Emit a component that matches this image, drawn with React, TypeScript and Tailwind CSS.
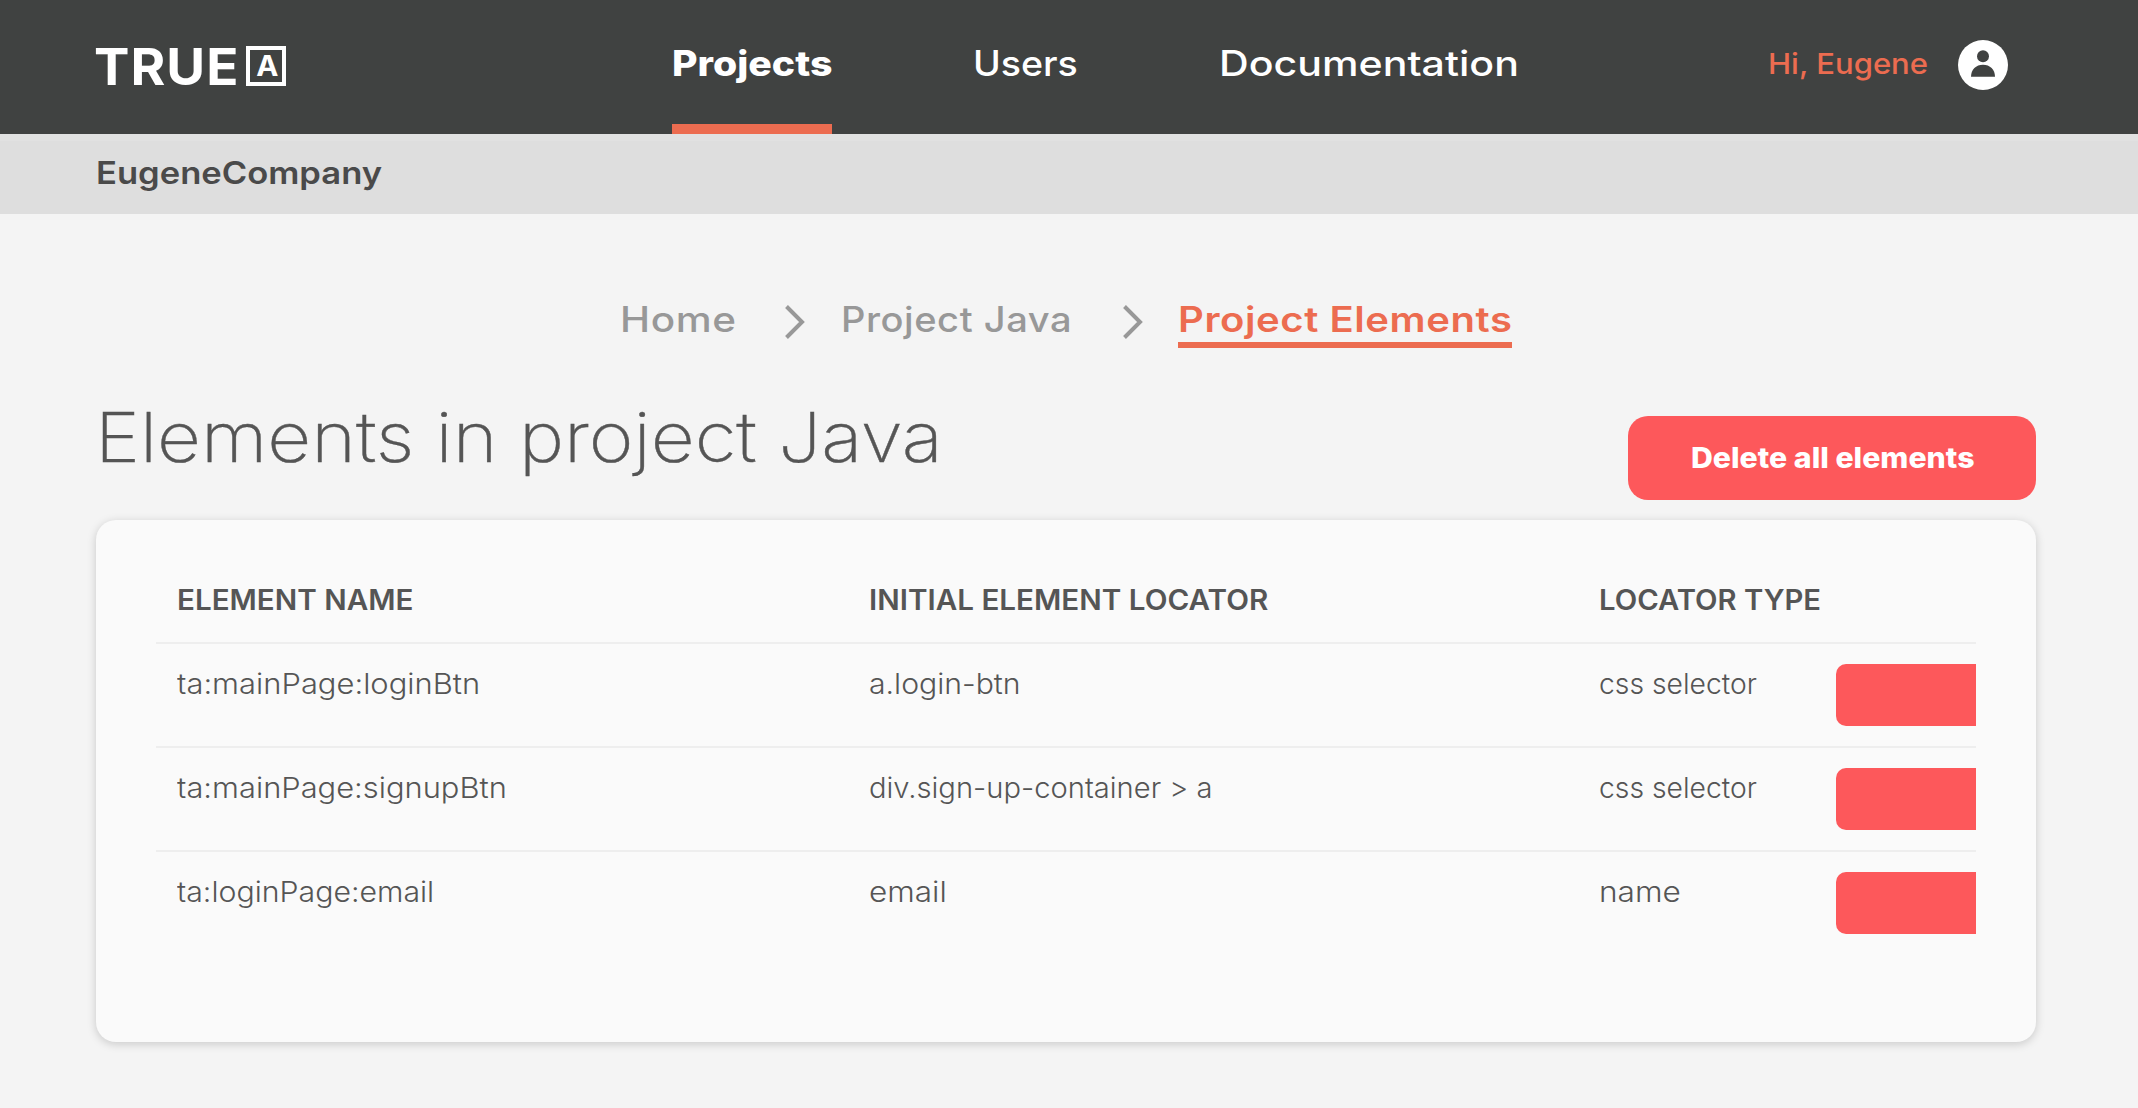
type Cell = { text: string; fit: string };

const rows: { name: Cell; locator: Cell; type: Cell }[] = [
  {
    name: { text: 'ta:mainPage:loginBtn', fit: 'scale-x-[1.104]' },
    locator: { text: 'a.login-btn', fit: 'scale-x-[1.078]' },
    type: { text: 'css selector', fit: 'scale-x-[1.01]' },
  },
  {
    name: { text: 'ta:mainPage:signupBtn', fit: 'scale-x-[1.102]' },
    locator: { text: 'div.sign-up-container > a', fit: 'scale-x-[1.041]' },
    type: { text: 'css selector', fit: 'scale-x-[1.01]' },
  },
  {
    name: { text: 'ta:loginPage:email', fit: 'scale-x-[1.081]' },
    locator: { text: 'email', fit: 'scale-x-[1.126]' },
    type: { text: 'name', fit: 'scale-x-[1.13]' },
  },
];

const headings: Cell[] = [
  { text: 'ELEMENT NAME', fit: 'scale-x-[1.057]' },
  { text: 'INITIAL ELEMENT LOCATOR', fit: 'scale-x-[1.058]' },
  { text: 'LOCATOR TYPE', fit: 'scale-x-[1.044]' },
];

function Wide({ text, fit }: Cell) {
  return <span className={`inline-block origin-left whitespace-nowrap ${fit}`}>{text}</span>;
}

function Logo() {
  return (
    <div className="flex w-[190px] shrink-0 pt-[42px] text-white">
      <div className="-ml-0.5 w-[152px] text-[51px] leading-[50px] font-bold tracking-[1px]">
        <Wide text="TRUE" fit="scale-x-[1.04]" />
      </div>
      <div className="mt-1 h-10 w-10 border-4 border-white pl-0.5 text-center text-[28px] leading-8 font-bold">
        <span className="inline-block scale-x-[1.06]">A</span>
      </div>
    </div>
  );
}

function Avatar() {
  return (
    <svg className="mt-10 shrink-0" width="50" height="50" viewBox="0 0 50 50">
      <circle cx="25" cy="25" r="25" fill="#fff" />
      <circle cx="25" cy="16.3" r="6" fill="#404241" />
      <path d="M13 36.7C13 29.5 18 24.7 25 24.7S37 29.5 37 36.7Z" fill="#404241" />
    </svg>
  );
}

function Chevron() {
  return (
    <svg className="mt-[8px] shrink-0" width="20" height="34" viewBox="0 0 20 34" fill="none" stroke="#989898" strokeWidth="4">
      <path d="M1.5 1.5L17 17L1.5 32.5" />
    </svg>
  );
}

export default function App() {
  return (
    <div className="h-[1108px] w-full overflow-hidden bg-[#f4f4f4] font-['Inter',sans-serif] text-[#555555]">
      <header className="flex h-[134px] items-start bg-[#404241] pl-24">
        <Logo />
        <nav className="ml-[386px] flex gap-[140px] text-[35px] leading-[44px] font-medium text-white">
          <a className="h-[134px] w-40 border-b-[10px] border-[#ec6c50] pt-[41px] font-extrabold">
            <Wide text="Projects" fit="scale-x-[1.12]" />
          </a>
          <a className="w-[107px] pt-[41px] pl-px">
            <Wide text="Users" fit="scale-x-[1.073]" />
          </a>
          <a className="w-[299px] pt-[41px]">
            <Wide text="Documentation" fit="scale-x-[1.175]" />
          </a>
        </nav>
        <div className="ml-[250px] w-[190px] pt-11 text-[29px] leading-10 font-medium text-[#ec6c50]">
          <Wide text="Hi, Eugene" fit="scale-x-[1.07]" />
        </div>
        <Avatar />
      </header>

      <div className="h-20 border-t-[7px] border-[#e1e1e1] bg-[#dedede] pl-24 text-[31px] leading-[64px] font-semibold text-[#4a4a4a]">
        <Wide text="EugeneCompany" fit="scale-x-[1.115]" />
      </div>

      <div className="flex pt-[83px] pl-[620px] text-[35px] leading-[44px] font-medium tracking-[0.5px] text-[#989898]">
        <a className="w-[116px]">
          <Wide text="Home" fit="scale-x-[1.155]" />
        </a>
        <div className="ml-[49px] w-[20px]">
          <Chevron />
        </div>
        <a className="ml-9 w-[232px]">
          <Wide text="Project Java" fit="scale-x-[1.088]" />
        </a>
        <div className="ml-[50px] w-[20px]">
          <Chevron />
        </div>
        <a className="ml-[35px] h-[51px] w-[334px] border-b-[6px] border-[#ec6c50] font-semibold text-[#ec6c50]">
          <Wide text="Project Elements" fit="scale-x-[1.144]" />
        </a>
      </div>

      <main className="w-[2036px] pt-[47px] pl-24">
        <div className="flex h-[105px] items-end justify-between">
          <h1 className="-ml-px self-start text-[69px] leading-[84px] font-extralight [-webkit-text-stroke:0.4px_#555555]">
            <Wide text="Elements in project Java" fit="scale-x-[1.105]" />
          </h1>
          <button className="h-[84px] w-[408px] rounded-[20px] bg-[#fd585b] pl-[63px] text-left text-[28px] leading-[84px] font-extrabold text-white">
            <Wide text="Delete all elements" fit="scale-x-[1.081]" />
          </button>
        </div>

        <section className="mt-5 h-[522px] rounded-[20px] bg-[#fafafa] px-[60px] text-[28px] leading-10 shadow-[0_2px_10px_rgba(0,0,0,0.18)]">
          <div className="grid h-[122px] grid-cols-[692px_730px_237px_140px] pt-[60px] pl-[21px] font-semibold">
            {headings.map((h) => (
              <div key={h.text}>
                <Wide {...h} />
              </div>
            ))}
          </div>
          {rows.map((row) => (
            <div
              key={row.name.text}
              className="grid h-[104px] grid-cols-[692px_730px_237px_140px] border-t-2 border-[#eeeeee] pt-5 pl-[21px] font-light"
            >
              <div>
                <Wide {...row.name} />
              </div>
              <div>
                <Wide {...row.locator} />
              </div>
              <div>
                <Wide {...row.type} />
              </div>
              <button className="h-[62px] rounded-l-[10px] bg-[#fd585b]" />
            </div>
          ))}
        </section>
      </main>
    </div>
  );
}
